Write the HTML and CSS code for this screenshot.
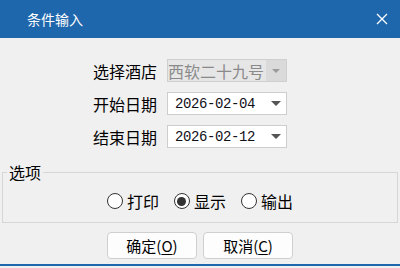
FILE: index.html
```html
<!DOCTYPE html>
<html lang="zh-CN">

<head>
  <meta charset="UTF-8" />
  <title>条件输入</title>
  <link rel="stylesheet" href="styles.css">
</head>

<body>
  <div class="dialog">
    <div class="title-bar">
      <span class="title">条件输入</span>
      <button class="close-btn" aria-label="关闭">
        <svg width="12" height="12" viewBox="0 0 12 12">
          <path d="M1 1 L11 11 M11 1 L1 11" stroke="#fff" stroke-width="1.3" fill="none" />
        </svg>
      </button>
    </div>

    <div class="form">
      <div class="row">
        <label>选择酒店</label>
        <div class="combo disabled">
          <span class="combo-text">西软二十九号</span>
          <span class="combo-arrow"></span>
        </div>
      </div>
      <div class="row">
        <label>开始日期</label>
        <div class="combo">
          <span class="combo-text date">2026-02-04</span>
          <span class="combo-arrow"></span>
        </div>
      </div>
      <div class="row">
        <label>结束日期</label>
        <div class="combo">
          <span class="combo-text date">2026-02-12</span>
          <span class="combo-arrow"></span>
        </div>
      </div>
    </div>

    <fieldset class="options">
      <legend>选项</legend>
      <div class="radio-row">
        <label class="radio"><span class="dot"></span>打印</label>
        <label class="radio"><span class="dot checked"></span>显示</label>
        <label class="radio"><span class="dot"></span>输出</label>
      </div>
    </fieldset>

    <div class="buttons">
      <button class="btn">确定(<u>O</u>)</button>
      <button class="btn">取消(<u>C</u>)</button>
    </div>

    <div class="bottom-line"></div>
  </div>
</body>

</html>
```

FILE: styles.css
```css
* {
  box-sizing: border-box;
  margin: 0;
  padding: 0;
}

body {
  width: 400px;
  height: 268px;
  overflow: hidden;
  background: #f0f0f0;
  font-family: "Noto Sans CJK SC", "Noto Sans", sans-serif;
  color: #000;
}

.dialog {
  display: flex;
  flex-direction: column;
  height: 268px;
}

.title-bar {
  height: 38px;
  background: #1f67ad;
  display: flex;
  align-items: center;
  justify-content: space-between;
  padding: 0 12px 0 27px;
}

.title {
  color: #fff;
  font-size: 14px;
}

.close-btn {
  background: none;
  border: none;
  width: 12px;
  height: 12px;
  display: flex;
}

.form {
  display: flex;
  flex-direction: column;
  gap: 10px;
  padding: 21px 0 0 93px;
}

.row {
  display: flex;
  align-items: center;
  height: 23px;
}

.row label {
  width: 74px;
  font-size: 16px;
  line-height: 20px;
}

.combo {
  width: 120px;
  height: 23px;
  border: 1px solid #cdcdcd;
  background: #fff;
  display: flex;
  align-items: center;
}

.combo-text {
  flex: 1;
  font-size: 16px;
  line-height: 20px;
  white-space: nowrap;
}

.combo-text.date {
  padding-left: 7px;
  font-family: "Liberation Mono", monospace;
  font-size: 14px;
  letter-spacing: -0.4px;
  color: #101018;
}

.combo-arrow {
  width: 20px;
  height: 21px;
  display: flex;
  align-items: center;
  justify-content: center;
}

.combo-arrow::after {
  content: "";
  border-left: 5px solid transparent;
  border-right: 5px solid transparent;
  border-top: 5px solid #555;
}

.combo.disabled {
  background: #e6e6e6;
  border-color: #cfcfcf;
}

.combo.disabled .combo-text {
  color: #8a8a8a;
}

.combo.disabled .combo-arrow {
  background: #dadada;
}

.combo.disabled .combo-arrow::after {
  border-left-width: 4px;
  border-right-width: 4px;
  border-top: 4px solid #9a9a9a;
}

.options {
  margin: 15px 2px 0 2px;
  border: 1px solid #d6d6d6;
  padding: 10px 0 11px 0;
}

.options legend {
  margin-left: 4px;
  padding: 0 2px;
  font-size: 16px;
  line-height: 18px;
}

.radio-row {
  display: flex;
  justify-content: center;
  gap: 15px;
}

.radio {
  display: flex;
  align-items: center;
  gap: 4px;
  font-size: 16px;
  line-height: 20px;
}

.dot {
  width: 16px;
  height: 16px;
  border: 1px solid #333;
  border-radius: 50%;
  background: #fff;
  display: flex;
  align-items: center;
  justify-content: center;
}

.dot.checked::after {
  content: "";
  width: 9px;
  height: 9px;
  border-radius: 50%;
  background: #333;
}

.buttons {
  display: flex;
  justify-content: center;
  gap: 6px;
  padding-top: 9px;
}

.btn {
  width: 90px;
  height: 27px;
  border: 1px solid #cfcfcf;
  border-radius: 4px;
  background: #fdfdfd;
  font-family: inherit;
  font-size: 15px;
  color: #000;
}

.btn u {
  text-underline-offset: 2px;
}

.bottom-line {
  margin-top: 5px;
  height: 2px;
  background: #1f67ad;
}
```
